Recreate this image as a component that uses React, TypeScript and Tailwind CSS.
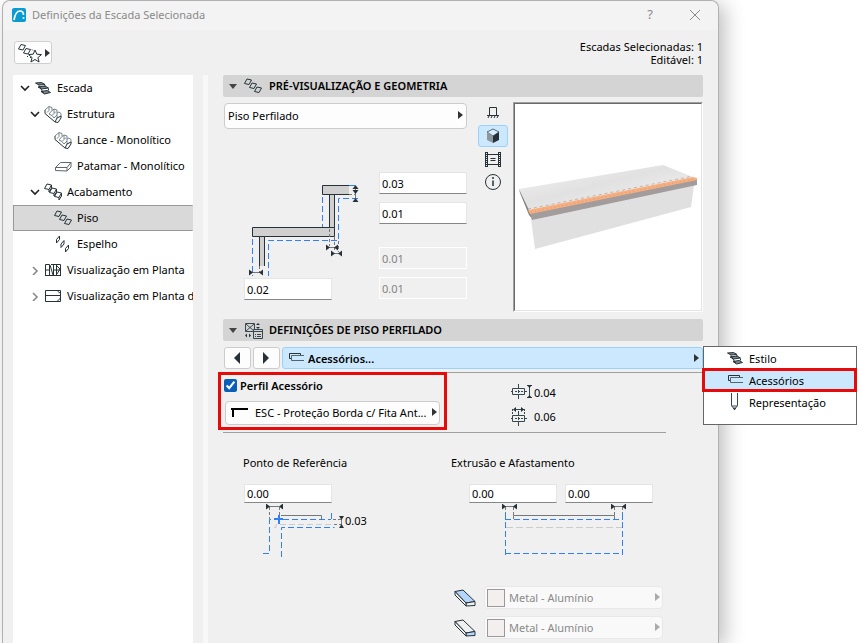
import { useState } from "react";
import type { ReactNode } from "react";

function StairIcon() {
  return (
    <svg width="18" height="16" viewBox="0 0 18 16" fill="#7c888e" stroke="#263238">
      <path d="M1.500 3l6-.5 3.500 2-6 .5zM4 7l7-1 3.500 2-7 1zM7 11.500l6-1 3.500 2-6 1.500z" />
      <path d="M5 5.500L7 9l2.500 4M11 5v2M14.500 8.500v2" fill="none" />
    </svg>
  );
}

function StructureIcon() {
  return (
    <svg width="18" height="18" viewBox="0 0 18 18" fill="none" stroke="#78858b">
      <path d="M1 5l4-3.500 3 1v3l2-1.500 3 1v3l2-1 2 1.500v3" />
      <path d="M5 1.500v4l-2 2M8 5.500L5 9l3 1.500 4-4M10 4v4M8 10.500L10 13l3-3V8M13 10v3" />
      <path d="M1 5v3.500L11 17l3 .5 3-4.500v-2l-4 2-2 4" stroke="#263238" />
    </svg>
  );
}

function LandingIcon() {
  return (
    <svg width="18" height="14" viewBox="0 0 18 14" fill="none" stroke="#5c686e">
      <path d="M1.500 8.500l5-5h10.500l-4 5zM1.500 8.500v3l11.500.5v-3.500M13 12l4-4V3.500" />
    </svg>
  );
}

function TreadsIcon() {
  return (
    <svg width="18" height="16" viewBox="0 0 18 16" fill="none" stroke="#263238">
      <path d="M.5 5.500l2.500-4.500 4.500 1L5 6.500zM5.500 9.500L8 5l4.500 1-2.500 4.500zM10.500 13.500L13 9l4.500 1-2.500 4.500z" />
    </svg>
  );
}

function FinishIcon() {
  return (
    <svg width="18" height="18" viewBox="0 0 18 18" fill="none" stroke="#263238">
      <path d="M.5 5.500l2.500-4.500 4.500 1L5 6.500zM5.500 9.500L8 5l4.500 1-2.500 4.500zM10.500 13.500L13 9l4.500 1-2.500 4.500z" />
      <path d="M5 6.500V9l2.500-4V2M10 10.500V13l2.500-4V6M15 14.500V17l2.500-4v-3" />
    </svg>
  );
}

function RisersIcon() {
  return (
    <svg width="18" height="18" viewBox="0 0 18 18" fill="none" stroke="#263238">
      <path d="M2.500 8V4.500l3-3.500v3.500zM7 12.500V9l3-3.500V9zM11.500 17v-3.500l3-3.500v3.500z" />
    </svg>
  );
}

function PlanIcon() {
  return (
    <svg width="18" height="14" viewBox="0 0 18 14" fill="none" stroke="#263238">
      <path d="M1.500 12.500v-11h4v11zM1 7h4M1 12.500h16M6 2l3 10M9.500 12V1.500M7 1.500h9.500v11M12.500 2v10M10 7h7M13 3l3 3-3 5" />
    </svg>
  );
}

function PlanDownIcon() {
  return (
    <svg width="18" height="14" viewBox="0 0 18 14" fill="none" stroke="#263238">
      <path d="M1.500 1.500h15v11h-15zM1 6.500h16M13.500 2l3 2.500M13.500 12l3-3" />
    </svg>
  );
}

function AccessoryIcon() {
  return (
    <svg width="16" height="12" viewBox="0 0 16 12" fill="none">
      <path d="M12.500 3V1.500h-11v5h2" stroke="#263238" />
      <path d="M16 3.500H3.500v5H16" stroke="#56646c" />
    </svg>
  );
}

function PencilIcon() {
  return (
    <svg width="16" height="18" viewBox="0 0 16 18" fill="none" stroke="#37474f">
      <path d="M4.500 0v12.500l3 4 3-4V0M4.500 13h6" />
      <path d="M6.500 15l1 2 1-2z" fill="#263238" />
    </svg>
  );
}

function ProfileSettingsIcon() {
  return (
    <svg width="19" height="17" viewBox="0 0 19 17" fill="none" stroke="#37474f">
      <path d="M1.500 1.500h9v8h-9zM2 2l8 7M10 2L2 9" />
      <path d="M14 1l-2 2h4zM14 7l-2-2h4zM1 13.500l2-2v4zM7 13.500l-2-2v4z" fill="#263238" stroke="none" />
      <path d="M9.500 7.500h9v9h-9z" fill="#d4d4d4" />
      <path d="M9 9.500h10M11 12.500h1M13 12.500h4M11 14.500h1M13 14.500h4" />
    </svg>
  );
}

function Triangle({ className = "" }: { className?: string }) {
  return (
    <svg width="5" height="8" viewBox="0 0 5 8" fill="currentColor" className={className}>
      <path d="M0 0l5 4-5 4z" />
    </svg>
  );
}

function NumberField({
  label,
  value,
  disabled,
  small,
}: {
  label: string;
  value: string;
  disabled?: boolean;
  small?: boolean;
}) {
  return (
    <input
      type="text"
      aria-label={label}
      defaultValue={value}
      disabled={disabled}
      className={`block w-[88px] border border-[#e5e5e5] border-b-[#868686] bg-white px-[2px] text-[11px] disabled:border-white disabled:bg-[#f0f0f0] disabled:text-[#838383] ${
        small ? "h-[19px]" : "h-[22px]"
      }`}
    />
  );
}

type TreeRowProps = {
  icon: ReactNode;
  label: string;
  level: number;
  open?: boolean;
  selected?: boolean;
};

const indents = ["pl-[6px]", "pl-[16px]", "pl-[26px]"];

function TreeRow({ icon, label, level, open, selected }: TreeRowProps) {
  return (
    <li>
      <button
        type="button"
        aria-expanded={open}
        className={`flex h-[26px] w-full items-center border text-left whitespace-nowrap ${indents[level]} ${
          selected ? "border-[#999] border-r-transparent bg-[#d9d9d9]" : "border-transparent"
        }`}
      >
        <span className="flex w-[14px] shrink-0">
          {open !== undefined && (
            <svg
              width="10"
              height="10"
              viewBox="0 0 10 10"
              fill="none"
              strokeWidth="1.6"
              stroke={open ? "#222" : "#8a8a8a"}
            >
              <path d={open ? "M1 3l4 4 4-4" : "M3 2l4 4-4 4"} />
            </svg>
          )}
        </span>
        <span className="mr-[5px] flex w-[18px] shrink-0 justify-center">{icon}</span>
        <span className="pb-[2px]">{label}</span>
      </button>
    </li>
  );
}

const tree: TreeRowProps[] = [
  { label: "Escada", level: 0, open: true, icon: <StairIcon /> },
  { label: "Estrutura", level: 1, open: true, icon: <StructureIcon /> },
  { label: "Lance - Monolítico", level: 2, icon: <StructureIcon /> },
  { label: "Patamar - Monolítico", level: 2, icon: <LandingIcon /> },
  { label: "Acabamento", level: 1, open: true, icon: <FinishIcon /> },
  { label: "Piso", level: 2, selected: true, icon: <TreadsIcon /> },
  { label: "Espelho", level: 2, icon: <RisersIcon /> },
  { label: "Visualização em Planta", level: 1, open: false, icon: <PlanIcon /> },
  { label: "Visualização em Planta d", level: 1, open: false, icon: <PlanDownIcon /> },
];

function SectionHeader({ icon, title }: { icon: ReactNode; title: string }) {
  return (
    <h2>
      <button
        type="button"
        aria-expanded="true"
        className="flex h-[22px] w-full items-center rounded-[2px] bg-[#d4d4d4] pl-[6px] text-left font-semibold"
      >
        <svg width="8" height="5" viewBox="0 0 8 5" fill="#444">
          <path d="M0 0h8L4 5z" />
        </svg>
        <span className="ml-[6px] flex w-[20px] justify-center">{icon}</span>
        <span className="ml-[6px] pb-[2px]">{title}</span>
      </button>
    </h2>
  );
}

function StepDrawing() {
  return (
    <svg width="120" height="94" viewBox="244 184 120 94" fill="none" className="block">
      <g fill="#d0d0d0" stroke="#263238">
        <path d="M329.500 194v34h5v-34z" />
        <path d="M349 185.500h-26.500v9H349" />
        <path d="M252.500 227.500h82v9h-82z" />
        <path d="M259.500 266v-29.500h5V266" />
      </g>
      <g stroke="#2f80f5" strokeDasharray="6 3">
        <path d="M322.500 197v30M349 185.500h9M358 198.500h-19.500v42h-70V276M252.500 239v37" />
      </g>
      <g stroke="#777" strokeDasharray="3 2">
        <path d="M349 194.500h7M329.500 229v17M334.500 237v15M338.500 241v11M259.500 266v6" />
      </g>
      <path d="M355.500 187v12M329 247.500h6M334 253.500h5M252 272.500h8" stroke="#777" />
      <g fill="#263238">
        <path d="M355.500 185l3 4h-6zM355.500 194l3-4h-6zM355.500 198l3 4h-6z" />
        <path d="M330 247.500l-4-3v6zM334 247.500l4-3v6zM335 253.500l-4-3v6zM338 253.500l4-3v6z" />
        <path d="M253 272.500l-4-3v6zM259 272.500l4-3v6z" />
      </g>
    </svg>
  );
}

function TreadPreview() {
  return (
    <svg width="100%" viewBox="515 160 186 90" className="block" role="img" aria-label="Vista 3D do piso">
      <defs>
        <linearGradient id="marble" x1="0" x2="1" y1="0" y2="1">
          <stop offset="0" stopColor="#e0e0e0" />
          <stop offset=".25" stopColor="#e9e9e9" />
          <stop offset=".45" stopColor="#e1e1e1" />
          <stop offset=".65" stopColor="#e9e9e9" />
          <stop offset="1" stopColor="#e2e2e2" />
        </linearGradient>
      </defs>
      <path d="M531 219l163-34-3 22-156 42z" fill="#e0e0e0" />
      <path d="M519 189l144-24 30 12-164 33z" fill="url(#marble)" />
      <path d="M519 189l10 21 4 10-4-5-9-22z" fill="#858282" />
      <path d="M530 213l167-34v6l-165 35z" fill="#a39c9c" />
      <path d="M528 210l165-33 4 1v2l-167 34z" fill="#f7ae80" />
      <path d="M531 212l163-33" stroke="#d99a72" strokeDasharray="1 3" />
      <path d="M528 209l165-33" stroke="#c2b5ae" strokeDasharray="3 3" />
    </svg>
  );
}

const viewButtons = [
  {
    label: "Vista lateral",
    icon: (
      <path d="M6.500 12V4.500h7V12M4 12.500h12M5 15l1-2M8 15l1-2M11 15l1-2M14 15l1-2" stroke="#263238" fill="none" />
    ),
  },
  {
    label: "Vista 3D",
    icon: (
      <>
        <path d="M10 3l6 3-6 4-6-4z" fill="#d7ecfc" stroke="#263238" strokeWidth=".7" />
        <path d="M4 6l6 4v7l-6-3z" fill="#8d979c" />
        <path d="M16 6l-6 4v7l6-3z" fill="#263238" />
      </>
    ),
  },
  {
    label: "Imagem",
    icon: (
      <>
        <path d="M3.500 3v15M16.500 3v15" stroke="#263238" strokeWidth="3" />
        <path d="M3.500 4v13M16.500 4v13" stroke="#f0f0f0" strokeDasharray="1 1" />
        <path d="M5 5.500h10M5 15.500h10M7.500 9.500h5M7.500 11.500h5" stroke="#263238" />
      </>
    ),
  },
  {
    label: "Informação",
    icon: (
      <>
        <circle cx="10" cy="10" r="7.500" stroke="#263238" fill="none" />
        <path d="M10 8.500V14M10 5v2" stroke="#263238" strokeWidth="1.500" />
      </>
    ),
  },
];

function ReferenceDrawing() {
  return (
    <svg width="82" height="54" viewBox="262 504 82 54" fill="none" className="block">
      <path d="M331 524.500h-55v3H272" stroke="#ccc" strokeDasharray="6 3" />
      <path d="M281 515.500h40.500v4" stroke="#777" />
      <g stroke="#2f80f5" strokeDasharray="6 3">
        <path d="M263 553.500h6.500v-34H331M281.500 557v-29.500h53M331.500 513v7" />
      </g>
      <path d="M274 519h9M279 515v9" stroke="#2f80f5" strokeWidth="2" />
      <path d="M269.500 507v12M279.500 507v8M333 519.500h8M334 524.500h7" stroke="#777" strokeDasharray="3 2" />
      <path d="M269 506.500h10M341.500 517v10" stroke="#777" />
      <g fill="#263238">
        <path d="M270 506.500l-4-3v6zM279 506.500l4-3v6zM341.500 520l2.500-4h-5zM341.500 524l2.500 4h-5z" />
      </g>
    </svg>
  );
}

function ExtrusionDrawing() {
  return (
    <svg width="126" height="54" viewBox="501 504 126 54" fill="none" className="block">
      <path d="M506 527.500h116" stroke="#ccc" strokeDasharray="7 3" />
      <path d="M513.500 519v-3.500h101v3.500" stroke="#777" />
      <g stroke="#2f80f5" strokeDasharray="6 3">
        <path d="M505.500 513v44M622.500 513v44M505 519.500h118M505 553.500h118" />
      </g>
      <path d="M505.500 507v6M513.500 507v8M614.500 507v8M622.500 507v6" stroke="#777" strokeDasharray="3 2" />
      <path d="M505 506.500h9M614 506.500h9" stroke="#777" />
      <g fill="#263238">
        <path d="M506 506.500l-4-3v6zM513 506.500l4-3v6zM615 506.500l-4-3v6zM622 506.500l4-3v6z" />
      </g>
    </svg>
  );
}

function BoxIcon({ top }: { top: boolean }) {
  return (
    <svg width="22" height="18" viewBox="0 0 22 18" fill="#f0f0f0" stroke="#263238">
      <path d="M1 2.500l8-1.500 12 11.500-9 1.500z" fill={top ? "#b5d6fb" : "#f0f0f0"} />
      <path d="M12 14l9-1.500v4l-9 .5z" fill={top ? "#f0f0f0" : "#b5d6fb"} />
      <path d="M1 2.500L12 14v3L1 6z" />
    </svg>
  );
}

function MaterialRow({ top, label }: { top: boolean; label: string }) {
  return (
    <div className="flex items-center gap-[8px]">
      <BoxIcon top={top} />
      <div className="relative flex w-[179px]">
        <select
          aria-label={label}
          disabled
          className="h-[23px] w-full appearance-none rounded-[4px] border border-[#e8e8e8] bg-[#f9f9f9] pl-[24px] text-[#8a8a8a] opacity-100"
        >
          <option>Metal - Alumínio</option>
        </select>
        <span className="pointer-events-none absolute top-[3px] left-[3px] size-[18px] border border-[#999] bg-[#f4efef]" />
        <Triangle className="pointer-events-none absolute top-[7px] right-[3px] text-[#aaa]" />
      </div>
    </div>
  );
}

const menuItems = [
  { label: "Estilo", icon: <StairIcon /> },
  { label: "Acessórios", icon: <AccessoryIcon /> },
  { label: "Representação", icon: <PencilIcon /> },
];

function PageMenu() {
  return (
    <ul
      role="menu"
      className="absolute -top-[1px] left-full z-10 h-[79px] w-[154px] border border-[#666] bg-white"
    >
      {menuItems.map((item) => (
        <li key={item.label} role="none" className="relative">
          <button
            type="button"
            role="menuitem"
            className={`flex h-[22px] w-full items-center gap-[5px] pl-[22px] text-left ${
              item.label === "Acessórios" ? "bg-[#cce8ff]" : ""
            }`}
          >
            <span className="flex w-[18px] justify-center">{item.icon}</span>
            {item.label}
          </button>
          {item.label === "Acessórios" && (
            <span className="pointer-events-none absolute -inset-y-[1px] -right-[1px] -left-[2px] border-[3px] border-[#e60a0a]" />
          )}
        </li>
      ))}
    </ul>
  );
}

export default function App() {
  const [hasProfile, setHasProfile] = useState(true);

  return (
    <div className="flex min-h-screen bg-white pr-[143px] pl-[2px] font-['Noto_Sans','Open_Sans',sans-serif] text-[11px] leading-[13px] text-black">
      <div
        role="dialog"
        aria-label="Definições da Escada Selecionada"
        className="flex min-w-0 flex-1 flex-col rounded-t-[8px] border border-b-0 border-[#b0b0b0] bg-[#f0f0f0] shadow-[6px_4px_20px_rgba(0,0,0,0.25)]"
      >
        <header className="flex h-[29px] items-center rounded-t-[8px] bg-[#f3f3f3] pr-[17px] pb-[2px] pl-[9px] text-[#8a8a8a]">
          <svg width="14" height="14" viewBox="0 0 14 14">
            <rect width="14" height="14" rx="2" fill="#0a9bd3" />
            <path d="M2 12C3 6 5 3 8 3c2.500 0 3.500 1 3.500 4" fill="none" stroke="#fff" strokeWidth="1.700" />
            <circle cx="11.500" cy="10" r="1" fill="#fff" />
          </svg>
          <h1 className="ml-[6px] flex-1 text-[11px]">Definições da Escada Selecionada</h1>
          <button type="button" aria-label="Ajuda" className="mr-[36px] text-[13px]">
            ?
          </button>
          <button type="button" aria-label="Fechar">
            <svg width="12" height="12" viewBox="0 0 12 12" stroke="#8a8a8a">
              <path d="M1 1l10 10M11 1L1 11" />
            </svg>
          </button>
        </header>

        <div className="flex items-start justify-between pt-[11px] pr-[15px] pl-[11px]">
          <button
            type="button"
            aria-label="Favoritos"
            className="flex h-[23px] w-[38px] items-center gap-[2px] rounded-[3px] border border-[#d0d0d0] bg-[#fdfdfd] pl-[3px]"
          >
            <svg width="25" height="20" viewBox="0 0 25 20" fill="none" stroke="#263238">
              <path d="M.5 6L3 1.500l4.500 1L5 7zM5.500 10L8 5.500l4.500 1L10 11zM9 13.500h1M12 14.500h1M14 6.500l1 1" />
              <path d="M17 7l1.800 4.200 4.700.4-3.600 3 1.200 4.400-4.100-2.500-4.100 2.500 1.200-4.400-3.600-3 4.700-.4z" fill="#fdfdfd" />
            </svg>
            <Triangle className="text-[#333]" />
          </button>
          <p className="-mt-[1px] text-right">
            Escadas Selecionadas: 1<br />
            Editável: 1
          </p>
        </div>

        <div className="flex flex-1 items-stretch pt-[9px] pl-[10px]">
          <nav aria-label="Partes da escada" className="w-[180px] shrink-0 overflow-hidden bg-white">
            <ul>
              {tree.map((row) => (
                <TreeRow key={row.label} {...row} />
              ))}
            </ul>
          </nav>
          <div className="ml-[10px] w-[5px] shrink-0 bg-[#f8f8f8]" />

          <main className="min-w-0 flex-1 pr-[15px] pb-[3px] pl-[15px]">
            <SectionHeader icon={<TreadsIcon />} title="PRÉ-VISUALIZAÇÃO E GEOMETRIA" />
            <section className="mt-[5px] flex h-[210px]">
              <div className="ml-[1px] w-[243px] shrink-0">
                <div className="relative flex pt-[1px]">
                  <select
                    aria-label="Tipo de piso"
                    className="h-[26px] w-full appearance-none rounded-[4px] border border-[#ccc] bg-[#fdfdfd] pb-[2px] pl-[3px]"
                  >
                    <option>Piso Perfilado</option>
                  </select>
                  <Triangle className="pointer-events-none absolute top-[9px] right-[4px] text-[#333]" />
                </div>
                <div className="mt-[43px] flex justify-between pl-[20px]">
                  <div className="pt-[12px]">
                    <StepDrawing />
                    <NumberField label="Saliência" value="0.02" />
                  </div>
                  <div className="flex flex-col">
                    <NumberField label="Espessura do piso" value="0.03" />
                    <div className="h-[8px]" />
                    <NumberField label="Afastamento do piso" value="0.01" />
                    <div className="h-[23px]" />
                    <NumberField label="Espessura do espelho" value="0.01" disabled />
                    <div className="h-[8px]" />
                    <NumberField label="Afastamento do espelho" value="0.01" disabled />
                  </div>
                </div>
              </div>
              <div className="mr-[5px] ml-[11px] flex w-[30px] shrink-0 flex-col gap-[1px]">
                {viewButtons.map((view) => (
                  <button
                    key={view.label}
                    type="button"
                    aria-label={view.label}
                    className={`flex h-[22px] items-center justify-center rounded-[3px] border ${
                      view.label === "Vista 3D" ? "border-[#99d1ff] bg-[#cce8ff]" : "border-transparent"
                    }`}
                  >
                    <svg width="20" height="20" viewBox="0 0 20 20" className="shrink-0">
                      {view.icon}
                    </svg>
                  </button>
                ))}
              </div>
              <div className="flex flex-1 flex-col border border-t-[#a0a0a0] border-r-[#fff] border-b-[#fff] border-l-[#a0a0a0]">
                <div className="flex-1 border border-t-[#696969] border-r-[#e3e3e3] border-b-[#e3e3e3] border-l-[#696969] bg-white pt-[56px]">
                  <TreadPreview />
                </div>
              </div>
            </section>

            <div className="mt-[7px]">
              <SectionHeader icon={<ProfileSettingsIcon />} title="DEFINIÇÕES DE PISO PERFILADO" />
            </div>
            <div className="mt-[6px] flex gap-[2px] border-b border-[#a0a0a0] pb-[3px] pl-[1px]">
              <button
                type="button"
                aria-label="Página anterior"
                className="flex h-[22px] w-[27px] items-center justify-center rounded-[3px] border border-[#ccc] bg-[#fdfdfd] text-[#263238]"
              >
                <svg width="7" height="12" viewBox="0 0 7 12" fill="currentColor">
                  <path d="M6 0L0 6l6 6z" />
                </svg>
              </button>
              <button
                type="button"
                aria-label="Página seguinte"
                className="flex h-[22px] w-[27px] items-center justify-center rounded-[3px] border border-[#ccc] bg-[#fdfdfd] text-[#263238]"
              >
                <svg width="7" height="12" viewBox="0 0 7 12" fill="currentColor">
                  <path d="M0 0l6 6-6 6z" />
                </svg>
              </button>
              <div className="relative flex-1">
                <button
                  type="button"
                  aria-haspopup="menu"
                  aria-expanded="true"
                  className="flex h-[22px] w-full items-center rounded-[3px] border border-[#99d1ff] bg-[#cce8ff] pr-[3px] pl-[5px] text-left font-semibold"
                >
                  <AccessoryIcon />
                  <span className="ml-[4px] flex-1">Acessórios...</span>
                  <Triangle className="text-[#333]" />
                </button>
                <PageMenu />
              </div>
            </div>

            <div className="flex">
              <fieldset className="-mt-[1px] -ml-[5px] h-[58px] w-[229px] border-[3px] border-[#e60a0a] pt-[4px] pl-[3px]">
                <label className="flex items-center gap-[3px] font-semibold">
                  <input
                    type="checkbox"
                    checked={hasProfile}
                    onChange={(e) => setHasProfile(e.target.checked)}
                    className="m-0 size-[13px] accent-[#0a5fb8]"
                  />
                  Perfil Acessório
                </label>
                <div className="relative mt-[9px] ml-[1px] flex w-[215px]">
                  <select
                    aria-label="Perfil do acessório"
                    className="h-[24px] w-full appearance-none rounded-[4px] border border-[#ccc] bg-[#fdfdfd] pb-[2px] pl-[29px]"
                  >
                    <option>ESC - Proteção Borda c/ Fita Ant...</option>
                  </select>
                  <svg
                    width="17"
                    height="9"
                    viewBox="0 0 17 9"
                    fill="none"
                    stroke="#000"
                    strokeWidth="2"
                    className="pointer-events-none absolute top-[7px] left-[6px]"
                  >
                    <path d="M0 1h17M2 1v8" />
                  </svg>
                  <Triangle className="pointer-events-none absolute top-[7px] right-[3px] text-[#333]" />
                </div>
              </fieldset>
              <div className="flex flex-col gap-[4px] pt-[9px] pl-[64px]">
                <div className="flex h-[20px] items-center">
                  <svg width="23" height="16" viewBox="0 0 23 16" fill="none" stroke="#37474f">
                    <path d="M1.500 4.500h12v6h-12zM7.500 0v4M7.500 11v4M0 7.500h2M14 7.500h2" />
                    <path d="M4 7.500h9" strokeDasharray="2 1" />
                    <path d="M7.500 6v3M18.500 2v12M16 1.500h5M16 13.500h5" />
                    <path d="M18.500 4L16 1h5zM18.500 11L16 14h5z" fill="#263238" stroke="none" />
                  </svg>
                  <span>0.04</span>
                </div>
                <div className="flex h-[20px] items-center">
                  <svg width="23" height="20" viewBox="0 0 23 20" fill="none" stroke="#37474f">
                    <path d="M1.500 9.500h12v6h-12zM7.500 5v4M7.500 16v4M0 12.500h2M14 12.500h2M3 3.500h10" />
                    <path d="M4 12.500h9M1.500 3v6M13.500 3v6" strokeDasharray="2 1" />
                    <path d="M7.500 11v3" />
                    <path d="M2 3.500L5 1v5zM13 3.500L10 1v5z" fill="#263238" stroke="none" />
                  </svg>
                  <span>0.06</span>
                </div>
              </div>
            </div>

            <div className="mt-[2px] mr-[37px] border-t border-[#a0a0a0] pt-[23px]">
              <div className="flex">
                <section className="w-[208px] shrink-0 pl-[20px]">
                  <h3>Ponto de Referência</h3>
                  <div className="mt-[15px] mb-[1px] pl-[1px]">
                    <NumberField label="Ponto de Referência" value="0.00" small />
                  </div>
                  <div className="flex pl-[19px]">
                    <ReferenceDrawing />
                    <span className="pt-[10px] pl-[1px]">0.03</span>
                  </div>
                </section>
                <section className="pl-[20px]">
                  <h3>Extrusão e Afastamento</h3>
                  <div className="mt-[15px] mb-[1px] flex gap-[8px] pl-[18px]">
                    <NumberField label="Afastamento inicial" value="0.00" small />
                    <NumberField label="Afastamento final" value="0.00" small />
                  </div>
                  <div className="pl-[50px]">
                    <ExtrusionDrawing />
                  </div>
                </section>
              </div>
              <div className="mt-[28px] flex flex-col gap-[7px] pl-[231px]">
                <MaterialRow top label="Material superior" />
                <MaterialRow top={false} label="Material lateral" />
              </div>
            </div>
          </main>
        </div>
      </div>
    </div>
  );
}
